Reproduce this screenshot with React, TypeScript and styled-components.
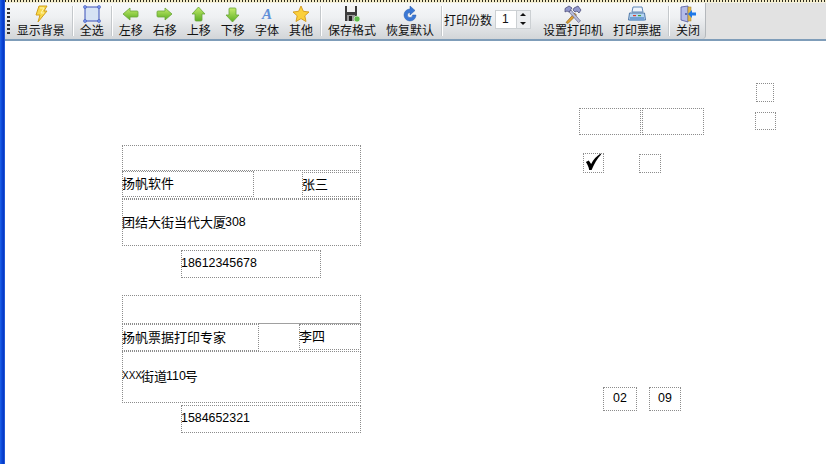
import React from "react";
import styled, { createGlobalStyle } from "styled-components";

const Global = createGlobalStyle`
  html, body { margin: 0; padding: 0; background: #fff; overflow: hidden; }
  body { font-family: "Noto Sans CJK SC", "Liberation Sans", sans-serif; color: #000; }
`;

const Page = styled.div`
  width: 826px;
  height: 464px;
  display: flex;
  overflow: hidden;
`;

const Edge = styled.div`
  width: 5px;
  flex: none;
  background: linear-gradient(90deg, #1e62e6 0, #0a46d8 40%, #0636c0 80%, #3a78ee 100%);
`;

const Main = styled.div`
  flex: 1;
  display: flex;
  flex-direction: column;
  min-width: 0;
`;

const TopDots = styled.div`
  height: 3px;
  flex: none;
  background: repeating-linear-gradient(90deg, #2c2c20 0 1px, #f4ecc8 1px 3px);
  border-bottom: 1px solid #f3f0dc;
  box-sizing: border-box;
`;

const ToolArea = styled.div`
  height: 38px;
  flex: none;
  display: flex;
  background: #e2e2e2;
  border-bottom: 2px solid #7f9db9;
  box-sizing: border-box;
`;

const Strip = styled.div`
  width: 701px;
  height: 36px;
  display: flex;
  align-items: stretch;
  padding: 0 0 0 1px;
  box-sizing: border-box;
  background: linear-gradient(180deg, #f6f7f9 0%, #eef0f2 40%, #d2d5d8 100%);
  border-right: 1px solid #b4b8bc;
  border-radius: 0 0 4px 0;
`;

const Grip = styled.div`
  width: 3px;
  margin: 5px 2px 3px 1px;
  background: repeating-linear-gradient(180deg, #333 0 2px, transparent 2px 4px);
`;

const Tool = styled.div`
  display: flex;
  flex-direction: column;
  align-items: center;
  flex: none;
  padding: 0 5px;
  font-size: 12px;
  line-height: 14px;
  white-space: nowrap;
  color: #111;
`;

const IconBox = styled.div`
  height: 18px;
  display: flex;
  align-items: center;
  justify-content: center;
  margin-top: 2px;
`;

const Sep = styled.div`
  width: 1px;
  flex: none;
  margin: 3px 2px;
  background: #c4c8cb;
  box-shadow: 1px 0 0 #fff;
`;

const PrintCount = styled.div`
  display: flex;
  align-items: center;
  flex: none;
  gap: 3px;
  font-size: 12px;
  color: #111;
  white-space: nowrap;
  padding: 0 7px 4px 0;
`;

const Spin = styled.div`
  display: flex;
  flex: none;
  width: 36px;
  height: 19px;
  border: 1px solid #ccd0d3;
  box-sizing: border-box;
  background: #fff;
`;

const SpinValue = styled.div`
  flex: 1;
  font: 12px "Liberation Sans", sans-serif;
  line-height: 16px;
  padding-left: 6px;
`;

const SpinButtons = styled.div`
  width: 13px;
  display: flex;
  flex-direction: column;
  border-left: 1px solid #ccd0d3;
  background: #eceef0;
`;

const SpinArrow = styled.div<{ $down?: boolean }>`
  flex: 1;
  display: flex;
  align-items: center;
  justify-content: center;
  &::after {
    content: "";
    border-left: 3px solid transparent;
    border-right: 3px solid transparent;
    ${(p) => (p.$down ? "border-top: 3px solid #111;" : "border-bottom: 3px solid #111;")}
  }
`;

const Canvas = styled.div`
  position: relative;
  flex: 1;
  background: #fff;
`;

/* Canvas coordinates are given in page pixels; the canvas starts at (5, 41). */
const Field = styled.div<{ $x: number; $y: number; $w: number; $h: number; $center?: boolean }>`
  position: absolute;
  left: ${(p) => p.$x - 5}px;
  top: ${(p) => p.$y - 41}px;
  width: ${(p) => p.$w}px;
  height: ${(p) => p.$h}px;
  box-sizing: border-box;
  border: 1px dotted #8c8c8c;
  padding-bottom: 2px;
  display: flex;
  align-items: center;
  justify-content: ${(p) => (p.$center ? "center" : "flex-start")};
  text-indent: ${(p) => (p.$center ? "0" : "-1px")};
  font-size: 13px;
  line-height: 16px;
  white-space: nowrap;
  color: #000;
`;

const Rule = styled.div`
  position: absolute;
  left: 254px;
  top: 282px;
  width: 102px;
  height: 1px;
  background: #a0a0a0;
`;

const Digits = styled.span`
  font-family: "Liberation Sans", sans-serif;
  font-size: 12.4px;
`;

const Caps = styled.span`
  font-family: "Liberation Sans", sans-serif;
  font-size: 10px;
`;

const A = styled.div`
  font: italic bold 15px "Liberation Serif", serif;
  color: #5f8fd8;
  line-height: 15px;
`;

const Bolt = () => (
  <svg width="18" height="18" viewBox="0 0 18 18">
    <path d="M7 1h8l-3 5h3L6 17l2-7H4z" fill="#f8d94a" stroke="#d2a01c" strokeWidth="1" />
    <path d="M8 3h4l-3 5h3" fill="none" stroke="#fff6b0" />
  </svg>
);
const SelectAll = () => (
  <svg width="18" height="18" viewBox="0 0 18 18">
    <rect x="2" y="2" width="14" height="14" fill="#d6e2f4" stroke="#3a50b8" />
    <g fill="#7f9cf0" stroke="#3a50b8" strokeWidth=".6">
      <circle cx="2" cy="2" r="1.5" />
      <circle cx="16" cy="2" r="1.5" />
      <circle cx="2" cy="16" r="1.5" />
      <circle cx="16" cy="16" r="1.5" />
    </g>
  </svg>
);
const arrowPaths: Record<string, string> = {
  left: "M1 8l7-6v3h7a1 1 0 0 1 1 1v4a1 1 0 0 1-1 1H8v3z",
  right: "M16 8L9 2v3H2a1 1 0 0 0-1 1v4a1 1 0 0 0 1 1h7v3z",
  up: "M8.5 1l6.5 7h-3v6a1 1 0 0 1-1 1H6a1 1 0 0 1-1-1V8H2z",
  down: "M8.5 16l6.5-7h-3V3a1 1 0 0 0-1-1H6a1 1 0 0 0-1 1v6H2z",
};
const Arrow = ({ dir }: { dir: string }) => (
  <svg width="17" height="17" viewBox="0 0 17 17">
    <defs>
      <linearGradient id={"g" + dir} x1="0" y1="0" x2="0" y2="1">
        <stop offset="0" stopColor="#c4ec6c" />
        <stop offset="1" stopColor="#5cae22" />
      </linearGradient>
    </defs>
    <path d={arrowPaths[dir]} fill={`url(#g${dir})`} stroke="#6aa63a" strokeWidth=".8" />
  </svg>
);
const Star = () => (
  <svg width="18" height="18" viewBox="0 0 18 18">
    <path d="M9 1l2.4 5.3 5.6.7-4.2 3.8 1.2 5.7L9 13.6 4 16.5l1.2-5.7L1 7l5.6-.7z" fill="#fbd03c" stroke="#d49a18" strokeWidth=".9" />
  </svg>
);
const Floppy = () => (
  <svg width="18" height="18" viewBox="0 0 18 18">
    <path d="M2 1h12v15H2z" fill="#3c3c3c" />
    <rect x="4" y="1" width="8" height="6" fill="#f2f2f2" />
    <rect x="4" y="10" width="8" height="6" fill="#9a9a9a" />
    <rect x="6" y="11" width="3" height="5" fill="#222" />
    <circle cx="14" cy="14" r="3" fill="#5cbc4a" stroke="#e8f4e0" strokeWidth=".7" />
  </svg>
);
const Refresh = () => (
  <svg width="18" height="18" viewBox="0 0 18 18">
    <path d="M9 4a6 6 0 1 0 6 6h-3.4A2.6 2.6 0 1 1 9 7.4V10l5-4.5L9 1z" fill="#3a78d6" stroke="#2458a8" strokeWidth=".5" />
  </svg>
);
const Tools = () => (
  <svg width="19" height="19" viewBox="0 0 19 19">
    <path d="M3 17.5L11.5 8l2 2L5 18.5z" fill="#e0a030" stroke="#7a5414" strokeWidth=".6" />
    <path d="M15.5 17.5L6 7l2-2 9.5 11z" fill="#b8bcd8" stroke="#50507a" strokeWidth=".6" />
    <path d="M2 3.5L6 1l3 2-3 4-2-1-2 1zM11 3l4-2 3 4-2 3-2-2-2 1-2-2z" fill="#9298cc" stroke="#40406e" strokeWidth=".7" />
  </svg>
);
const Printer = () => (
  <svg width="18" height="18" viewBox="0 0 18 18">
    <path d="M5 2h9l1 5H4z" fill="#eef4fb" stroke="#5f88b8" />
    <path d="M1.5 8h15l1 7h-17z" fill="#b4d4f2" stroke="#4f78a8" />
    <rect x="2" y="12" width="14" height="3.5" fill="#6f9fd4" />
    <rect x="5" y="10" width="3" height="1.2" fill="#d84030" />
    <rect x="10" y="10" width="3" height="1.2" fill="#40a040" />
  </svg>
);
const Door = () => (
  <svg width="18" height="18" viewBox="0 0 18 18">
    <path d="M2 2l7-1v16l-7-2z" fill="#b4bce8" stroke="#5058a0" strokeWidth=".8" />
    <rect x="9" y="2" width="3" height="14" fill="#e0b850" stroke="#a08020" strokeWidth=".5" />
    <circle cx="7" cy="9" r=".9" fill="#404890" />
    <path d="M17 7.5h-4V5l-4 4 4 4v-2.5h4z" fill="#1c78e8" />
  </svg>
);

type F = { x: number; y: number; w: number; h: number; center?: boolean; text?: React.ReactNode };

const fields: F[] = [
  { x: 122, y: 145, w: 239, h: 26 },
  { x: 122, y: 170, w: 239, h: 29 },
  { x: 122, y: 171, w: 132, h: 26, text: "扬帆软件" },
  { x: 302, y: 172, w: 59, h: 25, text: "张三" },
  { x: 122, y: 199, w: 239, h: 47, text: <>团结大街当代大厦<Digits>308</Digits></> },
  { x: 181, y: 250, w: 140, h: 28, text: <Digits>18612345678</Digits> },
  { x: 122, y: 295, w: 239, h: 29 },
  { x: 122, y: 324, w: 137, h: 27, text: "扬帆票据打印专家" },
  { x: 299, y: 324, w: 62, h: 26, text: "李四" },
  { x: 122, y: 351, w: 239, h: 52, text: <><Caps>XXX</Caps>街道<Digits>110</Digits>号</> },
  { x: 181, y: 405, w: 180, h: 28, text: <Digits>1584652321</Digits> },
  { x: 579, y: 108, w: 62, h: 27 },
  { x: 642, y: 108, w: 62, h: 27 },
  { x: 756, y: 83, w: 18, h: 19 },
  { x: 755, y: 112, w: 21, h: 18 },
  {
    x: 583, y: 153, w: 21, h: 20, center: true,
    text: (
      <svg width="20" height="18" viewBox="0 0 20 18">
        <path d="M2 9l3-1.5 2.5 3.5C10 6 13 3 17.5 0l.5 1C14 5 10.5 11 8 17.5H5.5C5 14 3.5 11.5 2 9z" fill="#000" />
      </svg>
    ),
  },
  { x: 639, y: 154, w: 22, h: 19 },
  { x: 603, y: 387, w: 34, h: 24, center: true, text: <Digits>02</Digits> },
  { x: 649, y: 387, w: 32, h: 24, center: true, text: <Digits>09</Digits> },
];

export default function App() {
  return (
    <Page>
      <Global />
      <Edge />
      <Main>
        <TopDots />
        <ToolArea>
          <Strip>
            <Grip />
            <Tool><IconBox><Bolt /></IconBox>显示背景</Tool>
            <Sep />
            <Tool><IconBox><SelectAll /></IconBox>全选</Tool>
            <Sep />
            <Tool><IconBox><Arrow dir="left" /></IconBox>左移</Tool>
            <Tool><IconBox><Arrow dir="right" /></IconBox>右移</Tool>
            <Tool><IconBox><Arrow dir="up" /></IconBox>上移</Tool>
            <Tool><IconBox><Arrow dir="down" /></IconBox>下移</Tool>
            <Tool><IconBox><A>A</A></IconBox>字体</Tool>
            <Tool><IconBox><Star /></IconBox>其他</Tool>
            <Sep />
            <Tool><IconBox><Floppy /></IconBox>保存格式</Tool>
            <Tool><IconBox><Refresh /></IconBox>恢复默认</Tool>
            <Sep />
            <PrintCount>
              打印份数
              <Spin>
                <SpinValue>1</SpinValue>
                <SpinButtons>
                  <SpinArrow />
                  <SpinArrow $down />
                </SpinButtons>
              </Spin>
            </PrintCount>
            <Tool><IconBox><Tools /></IconBox>设置打印机</Tool>
            <Tool><IconBox><Printer /></IconBox>打印票据</Tool>
            <Sep />
            <Tool><IconBox><Door /></IconBox>关闭</Tool>
          </Strip>
        </ToolArea>
        <Canvas>
          {fields.map((f, i) => (
            <Field key={i} $x={f.x} $y={f.y} $w={f.w} $h={f.h} $center={f.center}>
              {f.text}
            </Field>
          ))}
          <Rule />
        </Canvas>
      </Main>
    </Page>
  );
}
